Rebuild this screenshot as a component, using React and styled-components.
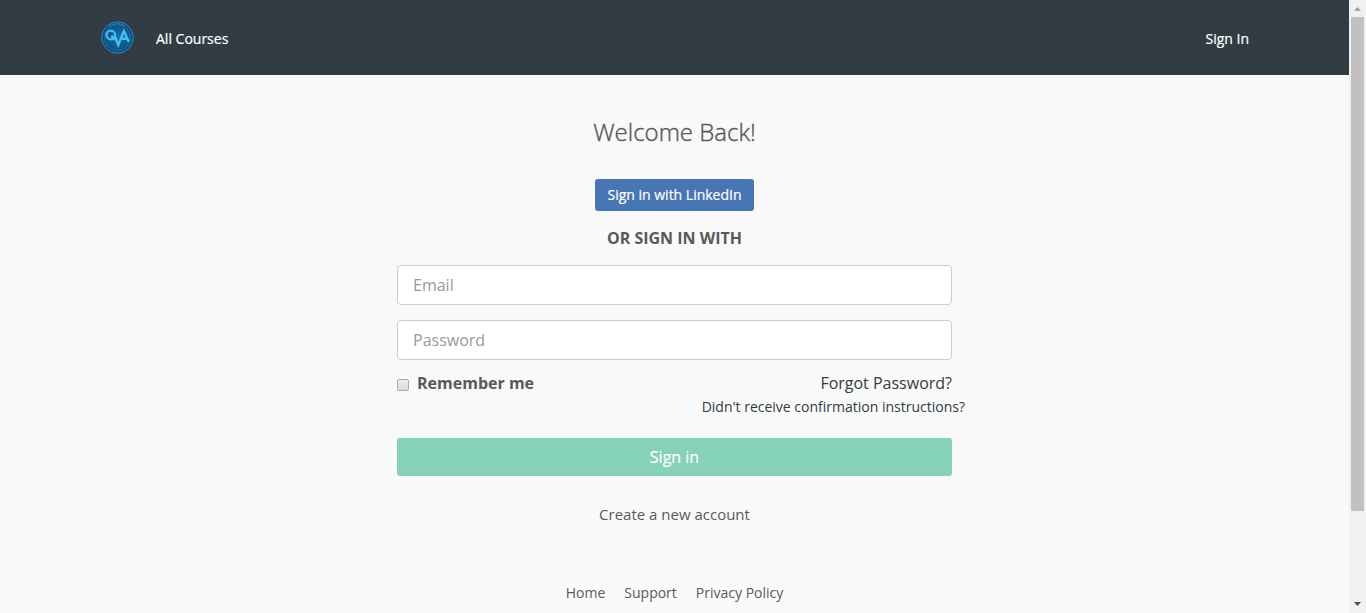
import React from 'react';
import styled, { createGlobalStyle } from 'styled-components';

const GlobalStyle = createGlobalStyle`
  *, *::before, *::after { box-sizing: border-box; }
  html, body { margin: 0; height: 100%; overflow: hidden; }
  body { font-family: 'Open Sans', 'Noto Sans', sans-serif; color: #595959; background: #f9f9f9; }
  a { color: inherit; text-decoration: none; white-space: nowrap; }
`;

const Window = styled.div`
  display: flex;
  width: 1366px;
  height: 613px;
  overflow: hidden;
`;

const Page = styled.div`
  width: 1349px;
  display: flex;
  flex-direction: column;
`;

const Header = styled.header`
  height: 75px;
  flex: none;
  background: #323d43;
  display: flex;
  align-items: center;
  padding: 0 100px 0 101px;
`;

const Logo = styled.svg`
  width: 33px;
  height: 33px;
  display: block;
  margin-right: 22px;
`;

const NavLink = styled.a`
  color: #fff;
  font-size: 14px;
  line-height: 20px;
  padding-top: 2px;
  margin-left: ${(p) => (p.$end ? 'auto' : '0')};
  -webkit-text-stroke: 0.2px #fff;
`;

const Main = styled.main`
  height: 477px;
  flex: none;
  display: flex;
  flex-direction: column;
  align-items: center;
  padding-top: 40px;
`;

const Title = styled.h1`
  margin: 0 0 30px;
  font-size: 24px;
  line-height: 34px;
  font-weight: 300;
  -webkit-text-stroke: 0.4px currentColor;
`;

const LinkedInButton = styled.button`
  width: 159px;
  height: 32px;
  padding: 0;
  border: 0;
  border-radius: 3px;
  background: #4875b4;
  color: #fff;
  font: 400 14px/32px 'Open Sans', sans-serif;
  white-space: nowrap;
  -webkit-text-stroke: 0.2px #fff;
`;

const Divider = styled.div`
  margin: 16px 0 15px;
  font-size: 16px;
  line-height: 23px;
  font-weight: 700;
`;

const Form = styled.form`
  width: 555px;
  display: flex;
  flex-direction: column;
`;

const Field = styled.input`
  height: 40px;
  margin-bottom: 15px;
  padding: 0 15px;
  border: 1px solid #ccc;
  border-radius: 4px;
  background: #fff;
  font: 400 16px/24px 'Open Sans', sans-serif;
  outline: none;
  &::placeholder { color: #999; opacity: 1; }
`;

const Options = styled.div`
  display: flex;
  justify-content: space-between;
  height: 67px;
  margin-top: -4px;
`;

const Remember = styled.label`
  display: flex;
  align-items: flex-start;
  font-size: 16px;
  line-height: 24px;
  font-weight: 700;
`;

const Checkbox = styled.input`
  appearance: none;
  width: 12px;
  height: 12px;
  margin: 8px 8px 0 0;
  border: 1px solid #aaa;
  border-radius: 2px;
  background: linear-gradient(#eee, #d9d9d9);
`;

const Help = styled.div`
  display: flex;
  flex-direction: column;
  align-items: flex-end;
  color: #323c42;
`;

const HelpLink = styled.a`
  font-size: ${(p) => (p.$small ? '14px' : '16px')};
  line-height: 24px;
  margin-right: ${(p) => (p.$small ? '-13px' : '0')};
`;

const Submit = styled.button`
  height: 38px;
  padding: 0;
  border: 0;
  border-radius: 3px;
  background: #86d1b9;
  color: #fff;
  font: 400 16px/38px 'Open Sans', sans-serif;
  -webkit-text-stroke: 0.2px #fff;
`;

const CreateLink = styled.a`
  margin-top: 26px;
  font-size: 15px;
  line-height: 24px;
`;

const Footer = styled.footer`
  flex: 1;
  background: #fafafa;
  display: flex;
  justify-content: center;
  gap: 19px;
  padding-top: 31px;
  font-size: 14px;
  line-height: 20px;
`;

const Scrollbar = styled.div`
  width: 17px;
  background: #f1f1f1;
  display: flex;
  flex-direction: column;
  align-items: center;
`;

const Arrow = styled.svg`
  width: 17px;
  height: 17px;
  display: block;
`;

const Thumb = styled.div`
  width: 13px;
  height: 494px;
  margin-bottom: auto;
  background: #c1c1c1;
`;

function BrandLogo() {
  return (
    <Logo viewBox="0 0 33 33" fill="none">
      <defs>
        <radialGradient id="disc">
          <stop offset="0" stopColor="#1a6cab" />
          <stop offset="1" stopColor="#0e4a7c" />
        </radialGradient>
      </defs>
      <circle cx="16.5" cy="16.5" r="15.8" fill="url(#disc)" stroke="#1f8cc4" strokeWidth="1" />
      <circle cx="16.5" cy="16.5" r="13" stroke="#1c7ab2" strokeWidth=".8" />
      <path d="M8.5 5.2A13.8 13.8 0 0 1 24.5 5.2" stroke="#238fc2" strokeWidth="1.2" strokeDasharray="1.4 1" />
      <circle cx="9.8" cy="14" r="4.3" stroke="#41c0f0" strokeWidth="2.3" />
      <path d="M10.4 14.8L14.4 18.8M14.3 16L17.2 24L22.9 10L27.8 21M21 17.8H26" stroke="#41c0f0" strokeWidth="2.4" />
    </Logo>
  );
}

export default function App() {
  return (
    <>
      <GlobalStyle />
      <Window>
        <Page>
          <Header>
            <BrandLogo />
            <NavLink href="#">All Courses</NavLink>
            <NavLink href="#" $end>Sign In</NavLink>
          </Header>
          <Main>
            <Title>Welcome Back!</Title>
            <LinkedInButton type="button">Sign in with LinkedIn</LinkedInButton>
            <Divider>OR SIGN IN WITH</Divider>
            <Form>
              <Field type="email" placeholder="Email" />
              <Field type="password" placeholder="Password" />
              <Options>
                <Remember>
                  <Checkbox type="checkbox" />
                  Remember me
                </Remember>
                <Help>
                  <HelpLink href="#">Forgot Password?</HelpLink>
                  <HelpLink href="#" $small>Didn't receive confirmation instructions?</HelpLink>
                </Help>
              </Options>
              <Submit type="button">Sign in</Submit>
            </Form>
            <CreateLink href="#">Create a new account</CreateLink>
          </Main>
          <Footer>
            <a href="#">Home</a>
            <a href="#">Support</a>
            <a href="#">Privacy Policy</a>
          </Footer>
        </Page>
        <Scrollbar>
          <Arrow viewBox="0 0 17 17"><path d="M5 11L8.5 7L12 11Z" fill="#a3a3a3" /></Arrow>
          <Thumb />
          <Arrow viewBox="0 0 17 17"><path d="M5 6L8.5 10L12 6Z" fill="#505050" /></Arrow>
        </Scrollbar>
      </Window>
    </>
  );
}
